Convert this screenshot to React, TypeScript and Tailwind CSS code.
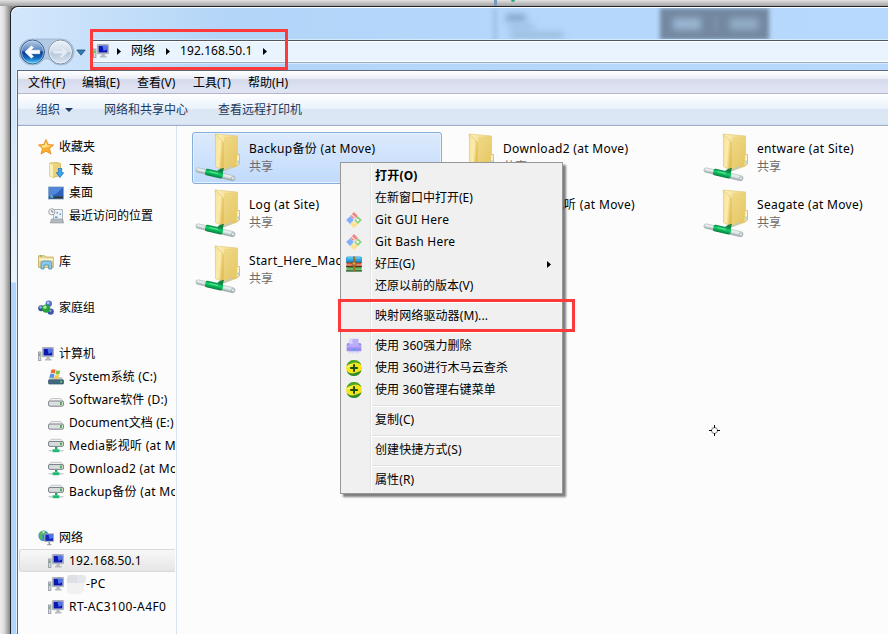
import type { ReactNode } from "react";

type IconProps = { className?: string };

function MonitorIcon({ className = "" }: IconProps) {
  return (
    <svg className={`size-4 shrink-0 ${className}`} viewBox="0 0 16 16">
      <rect x="0.5" y="6" width="2.4" height="8.5" fill="#d5d9de" stroke="#8f969e" strokeWidth="0.8" />
      <path d="M1.1 7.500h1.200v2.500H1.100z" fill="#39c23f" />
      <rect x="4.400" y="1.500" width="11.200" height="9.200" rx="0.6" fill="#c9cdd4" stroke="#9a9fa8" strokeWidth="0.8" />
      <rect x="5.600" y="2.700" width="8.800" height="6.800" fill="#0b17b0" />
      <path d="M9.500 2.700h4.900v3.600L10.600 8z" fill="#4f74ec" />
      <path d="M8.700 11h2.800l.5 2h1.500v1.400H7V13h1.200z" fill="#b4b9c0" />
    </svg>
  );
}

function StarIcon() {
  return (
    <svg className="size-4 shrink-0" viewBox="0 0 16 16">
      <path
        d="M8 .5l2.200 4.900 5.400.6-4.100 3.500 1.500 5.600L8 12.200l-5 2.900 1.500-5.600L.4 6l5.400-.6z"
        fill="#fdae2c"
        stroke="#e08a1c"
        strokeWidth="0.8"
      />
      <path d="M8 2.500l1.300 3.700 4 .5-5 1.500L5 9 2.800 6.800l3.900-.5z" fill="#ffe38f" />
    </svg>
  );
}

function DownloadsIcon() {
  return (
    <svg className="size-4 shrink-0" viewBox="0 0 16 16">
      <path d="M1.500 1L9 .5 12.500 1.500v12L5 15.500 1.500 14z" fill="#ecd27c" stroke="#c9aa4c" strokeWidth="0.7" />
      <path d="M1.500 1l3.500 2v12.500L1.500 14z" fill="#fbeeb4" />
      <path d="M10.300 6.500h3.400v4.200h2L12 15.600l-3.700-4.900h2z" fill="#3aa7ec" stroke="#1668b4" strokeWidth="0.7" />
    </svg>
  );
}

function DesktopIcon() {
  return (
    <svg className="size-4 shrink-0" viewBox="0 0 16 16">
      <rect x="0.5" y="2" width="15" height="12" fill="#2d62b8" stroke="#8ba6c9" strokeWidth="0.9" />
      <path d="M1 2.500h14L8 9 1 11z" fill="#5087d8" />
      <path d="M1 11.600h14v2H1z" fill="#32383f" />
      <circle cx="3.600" cy="11.600" r="2" fill="#3a8ade" />
      <path d="M2.600 10.600h1v1h-1z" fill="#f4d35a" />
      <path d="M3.800 11.800h1v1h-1z" fill="#80d56b" />
    </svg>
  );
}

function RecentIcon() {
  return (
    <svg className="size-4 shrink-0" viewBox="0 0 16 16">
      <path d="M5.500 1.500h9v10h-9z" fill="#eef2f5" stroke="#9ba3aa" strokeWidth="0.8" />
      <path d="M8.500 4h1.500v1.500H8.500zM11.500 5.500H13V7h-1.500zM7 8.500h2.500V10H7z" fill="#4b9ae0" />
      <path d="M3.500 11h11l1.200 4H2.200z" fill="#b4b9bd" stroke="#8e9498" strokeWidth="0.6" />
      <circle cx="3.800" cy="3.800" r="3.100" fill="#f3f5f6" stroke="#9299a0" strokeWidth="0.9" />
      <path d="M3.800 2v2h1.600" fill="none" stroke="#596067" strokeWidth="0.8" />
    </svg>
  );
}

function LibraryIcon() {
  return (
    <svg className="size-4 shrink-0" viewBox="0 0 16 16">
      <path d="M.5 3V1.700h6L8 3h7.300v10.500H.5z" fill="#ead795" stroke="#c5a855" strokeWidth="0.8" />
      <path d="M1 4.500h14v2H1z" fill="#fdf5cf" />
      <path d="M2 1.500h2v1H2z" fill="#45b649" />
      <path d="M3 15V9.500Q3 7 5.500 7h5.800q2.400 0 2.400 2.500V15h-3v-4H6v4z" fill="#8cc9ea" stroke="#438db8" strokeWidth="0.8" />
    </svg>
  );
}

function HomegroupIcon() {
  return (
    <svg className="size-4 shrink-0" viewBox="0 0 16 16">
      <circle cx="10.800" cy="3.800" r="3.200" fill="#5274c8" />
      <circle cx="3.200" cy="8.300" r="3" fill="#35509e" />
      <circle cx="12.600" cy="11.600" r="3.200" fill="#3b57ad" />
      <circle cx="8" cy="8.600" r="4.200" fill="#29a23a" />
      <circle cx="10.200" cy="2.800" r="1.400" fill="#b4c8f2" />
      <circle cx="2.600" cy="7.300" r="1.200" fill="#9fb3e6" />
      <circle cx="7" cy="7.200" r="1.700" fill="#a7e4a2" />
      <circle cx="12.400" cy="10.800" r="1.100" fill="#93a9e2" />
    </svg>
  );
}

function SystemDriveIcon() {
  return (
    <svg className="size-4 shrink-0" viewBox="0 0 16 16">
      <path d="M2.300 8h11.400l1.800 3v3.600H.5V11z" fill="#c3c9cf" />
      <rect x="0.5" y="10.800" width="15" height="4.300" rx="0.8" fill="#41697f" stroke="#31505f" strokeWidth="0.6" />
      <path d="M12.300 11.800h1.600v2h-1.600z" fill="#5ee04c" />
      <path d="M3.400.8q2.200-1.200 4.300 0l-1 3.800q-2-1.100-4.300 0z" fill="#ee6a33" />
      <path d="M8.400 1.200q1.900 1 4 0l-1 3.900q-2 1-4 0z" fill="#7fc247" />
      <path d="M2.200 5.300q2.200-1 4.300 0l-1 3.800q-2-1.100-4.300 0z" fill="#4c92de" />
      <path d="M7.200 5.700q1.900 1 4 0l-1 3.900q-2 1-4 0z" fill="#fbc73a" />
    </svg>
  );
}

function DriveIcon() {
  return (
    <svg className="size-4 shrink-0" viewBox="0 0 16 16">
      <path d="M3 6.500h10l2.300 3v4H.7v-4z" fill="#eff0f2" stroke="#b0b4b8" strokeWidth="0.7" />
      <rect x="0.500" y="9" width="15" height="5.200" rx="1.600" fill="#dcdfe2" stroke="#74787e" strokeWidth="0.9" />
      <path d="M12 10h1.800v3H12z" fill="#42b23d" />
    </svg>
  );
}

function NetDriveIcon() {
  return (
    <svg className="size-4 shrink-0" viewBox="0 0 16 16">
      <path d="M3 1.300h10l2.300 2.500v3.400H.7V3.800z" fill="#eff0f2" stroke="#b0b4b8" strokeWidth="0.7" />
      <rect x="0.500" y="3.500" width="15" height="4.900" rx="1.500" fill="#d8dbde" stroke="#74787e" strokeWidth="0.9" />
      <path d="M12 4.400h1.800v2.800H12z" fill="#42b23d" />
      <path d="M7 9h2.400v2.500H7z" fill="#2aa36b" />
      <path d="M.6 12h4v1.600h-4zM11.400 12h4v1.600h-4z" fill="#c9cdd0" />
      <path d="M4.600 11.300h6.800v2.900H4.600z" fill="#1dbb71" />
    </svg>
  );
}

function NetworkIcon() {
  return (
    <svg className="size-4 shrink-0" viewBox="0 0 16 16">
      <circle cx="5.600" cy="5.800" r="5.200" fill="#3189cd" />
      <path d="M2 2.500Q5-.4 8 1.500 6.500 5 3.500 5.500L5 8.500 3.500 10Q-.5 7 2 2.500z" fill="#52b956" />
      <path d="M4 1.600q2-.8 3 .2L5 3.600z" fill="#d9f4dc" />
      <rect x="6.600" y="3.800" width="9.200" height="7.800" fill="#c9cdd4" stroke="#979ca6" strokeWidth="0.6" />
      <rect x="7.300" y="4.500" width="7.800" height="6.400" fill="#1226bb" />
      <path d="M10.500 4.500h4.600v3.500L11.500 9z" fill="#4e75ec" />
      <path d="M10.400 12h1.800v2h1.200v1.200H9.200V14h1.200z" fill="#9da3ad" />
    </svg>
  );
}

function GitIcon() {
  return (
    <svg className="size-4 shrink-0" viewBox="0 0 16 16">
      <path d="M8 0l3.900 3.900L8 7.800 4.100 3.900z" fill="#f28585" />
      <path d="M4.100 4.200L8 8.100 4.100 12 .2 8.100z" fill="#80aefc" />
      <path d="M11.900 4.200l3.900 3.900-3.900 3.900L8 8.100z" fill="#82d472" />
      <path d="M8 8.300l3.900 3.900L8 16l-3.900-3.800z" fill="#fde18a" />
      <path d="M4.600 1.800l6.800 6M8 6v6" stroke="#f1f1f1" strokeWidth="1.100" />
      <circle cx="11.800" cy="8.100" r="1.400" fill="#f1f1f1" />
    </svg>
  );
}

function HaozipIcon() {
  return (
    <svg className="size-4 shrink-0" viewBox="0 0 16 16">
      <rect x="0" y="0.500" width="16" height="6" rx="1.800" fill="#2fa3dc" />
      <path d="M1.300 1.200h13.400v1.500H1.300z" fill="#6cc8f0" />
      <path d="M0 5.600h16v1.200H0z" fill="#155a80" />
      <path d="M.5 6.800h15v3H.5z" fill="#d1512c" />
      <path d="M.5 8.600h15v.7H.5z" fill="#f5d6bb" />
      <path d="M0 9.800h16V11H0z" fill="#70251a" />
      <path d="M.5 11h15v3.700H.5z" fill="#3a963c" />
      <path d="M.5 12.600h15v.8H.5z" fill="#cbe9b0" />
      <path d="M0 14.400h16v1.200H0z" fill="#1f5425" />
      <path d="M7 .5h2.200v15H7z" fill="#a5702e" />
      <path d="M6.200 6h3.700v3H6.200z" fill="#dfa84a" stroke="#6a441c" strokeWidth="0.6" />
    </svg>
  );
}

function ShredIcon() {
  return (
    <svg className="size-4 shrink-0" viewBox="0 0 16 16">
      <path d="M3.500.8h9V9h-9z" fill="#bcaff8" />
      <path d="M3.500.8h3v5h-3z" fill="#d8d0fd" />
      <path d="M1.600 5h1.900v4h9V5h1.900l.9 1.200v7H.7v-7z" fill="#9b8cf0" />
      <path d="M1 7.600h14v1.800H1z" fill="#b6a9fa" />
      <path d="M6.600 11h2.800v1.500H6.600z" fill="#46a9ee" />
      <path d="M3 13.200h10v1.300H3z" fill="#cfc7fa" />
      <path d="M3 14.500h1.200V16H3zM6 14.500h1.200v1H6zM9 14.500h1.200v1H9zM11.800 14.500H13V16h-1.200z" fill="#ded9fa" />
    </svg>
  );
}

function Shield360Icon() {
  return (
    <svg className="size-4 shrink-0" viewBox="0 0 16 16">
      <circle cx="8" cy="8" r="7.900" fill="#f6e51a" />
      <path d="M.4 5.800Q2.500-.4 9 .1q4.600.6 6.400 5Q11.500 1.600 7 3 3 4.200.4 5.800z" fill="#4aa52c" />
      <path d="M15.600 10.200Q13.500 16.400 7 15.900q-4.600-.6-6.400-5Q4.500 14.400 9 13q4-1.200 6.600-2.800z" fill="#2e8b2e" />
      <path d="M1.600 6.500Q4.500 3.600 8.500 3.400 4.500 4.700 1.700 8z" fill="#fdf9a8" />
      <path d="M7 4.200h2v2.800h2.800v2H9v2.800H7V9H4.200V7H7z" fill="#1c4f12" />
    </svg>
  );
}

function SharedFolderIcon() {
  return (
    <svg className="-ml-0.5 h-[52px] w-[54px] shrink-0" viewBox="0 0 54 52">
      <defs>
        <linearGradient id="folderBack" x1="0" x2="1" y1="0" y2="1">
          <stop offset="0" stopColor="#fdf2bd" />
          <stop offset="1" stopColor="#dfbd58" />
        </linearGradient>
        <linearGradient id="folderFlap" x1="0" x2="1" y1="0" y2="0.4">
          <stop offset="0" stopColor="#f7e396" />
          <stop offset="0.6" stopColor="#fbecae" />
          <stop offset="1" stopColor="#e3bd55" />
        </linearGradient>
        <linearGradient id="pipe" x1="0" x2="0" y1="0" y2="1">
          <stop offset="0" stopColor="#f4f8f8" />
          <stop offset="0.5" stopColor="#dbe4e5" />
          <stop offset="1" stopColor="#93a2a4" />
        </linearGradient>
        <linearGradient id="joint" x1="0" x2="0" y1="0" y2="1">
          <stop offset="0" stopColor="#0b8a46" />
          <stop offset="0.4" stopColor="#12d06a" />
          <stop offset="1" stopColor="#067a39" />
        </linearGradient>
      </defs>
      <path d="M24 2l22.500 2v30l-14 5z" fill="url(#folderBack)" stroke="#e3cb7c" strokeWidth="0.7" />
      <path d="M33 5l13.500-1v28L33 38z" fill="#e9cb68" opacity="0.5" />
      <path d="M46.500 22.500h2v9.500l-3 1.500" fill="#fbf3d3" stroke="#d7ba62" strokeWidth="0.9" />
      <path d="M47 28.500v3" stroke="#74b8e8" strokeWidth="1" />
      <path d="M24.400 2l8.100 8.500v28L24.500 34.500z" fill="url(#folderFlap)" stroke="#dfc169" strokeWidth="0.6" />
      <path d="M30 40l10-5" stroke="#bccacb" strokeWidth="1.800" />
      <path d="M26 39q4-3.500 7-3l-1.500 5z" fill="#10843e" />
      <g transform="rotate(13 24 42)">
        <rect x="4.500" y="39.800" width="12" height="4.400" rx="2" fill="url(#pipe)" stroke="#a3b1b1" strokeWidth="0.600" />
        <rect x="30" y="39.600" width="14.500" height="5" rx="2.200" fill="url(#pipe)" stroke="#a3b1b1" strokeWidth="0.600" />
        <rect x="14" y="38.600" width="18" height="6.600" rx="1.800" fill="url(#joint)" />
        <path d="M18 40.800h9" stroke="#5fe898" strokeWidth="1.200" />
        <circle cx="42.300" cy="42.200" r="1.700" fill="#dfe7e8" stroke="#8e9c9e" strokeWidth="0.600" />
      </g>
    </svg>
  );
}

function NavButtons() {
  return (
    <svg className="-mt-[3px] h-[30px] w-[71px] shrink-0" viewBox="0 0 71 30">
      <defs>
        <linearGradient id="back" x1="0" x2="0" y1="0" y2="1">
          <stop offset="0" stopColor="#b9cde8" />
          <stop offset="0.44" stopColor="#5a84c0" />
          <stop offset="0.5" stopColor="#0c3c8b" />
          <stop offset="0.75" stopColor="#1468bd" />
          <stop offset="1" stopColor="#4fdcff" />
        </linearGradient>
        <linearGradient id="forward" x1="0" x2="0" y1="0" y2="1">
          <stop offset="0" stopColor="#eaf0f7" />
          <stop offset="0.48" stopColor="#d3deea" />
          <stop offset="0.52" stopColor="#b6c6d9" />
          <stop offset="1" stopColor="#d9e5f3" />
        </linearGradient>
      </defs>
      <path
        d="M13 2h29a12.800 12.800 0 0 1 0 26q-7 0-10-5-4-3-8 0-3 5-11 5a12.800 12.800 0 0 1 0-26z"
        fill="#b3cae3"
        stroke="#9bb4cf"
        strokeWidth="0.8"
      />
      <circle cx="13.500" cy="15" r="11.900" fill="url(#back)" stroke="#34527f" strokeWidth="0.9" />
      <circle cx="13.500" cy="15" r="11" fill="none" stroke="#b4d8f1" strokeWidth="0.700" />
      <path
        d="M6 15l6.500-6.200 1.900 1.900-2.700 2.600h9v3.400h-9l2.700 2.600-1.900 1.900z"
        fill="#fff"
        stroke="#fff"
        strokeWidth="0.600"
        strokeLinejoin="round"
      />
      <circle cx="41.500" cy="15" r="11.900" fill="url(#forward)" stroke="#7a8a9e" strokeWidth="0.9" />
      <circle cx="41.500" cy="15" r="10.900" fill="none" stroke="#f2f6fb" strokeWidth="0.800" />
      <path
        d="M49 15l-6.500-6.200-1.900 1.900 2.700 2.600h-9v3.400h9l-2.700 2.600 1.900 1.900z"
        fill="#e3ebf4"
        stroke="#c3d0de"
        strokeWidth="0.500"
        strokeLinejoin="round"
      />
      <path d="M57.800 13h8.400L62 18.200z" fill="#2f7db4" stroke="#1f5079" strokeWidth="0.800" />
    </svg>
  );
}

function Arrow({ className = "" }: IconProps) {
  return (
    <svg className={`h-[7px] w-1 shrink-0 ${className}`} viewBox="0 0 4 7">
      <path d="M0 0l4 3.500-4 3.500z" fill="#000" />
    </svg>
  );
}

type TreeRow = {
  label: ReactNode;
  icon: ReactNode;
  root?: boolean;
  selected?: boolean;
  tracking?: string;
} | null;

const tree: TreeRow[] = [
  { label: "收藏夹", icon: <StarIcon />, root: true },
  { label: "下载", icon: <DownloadsIcon /> },
  { label: "桌面", icon: <DesktopIcon /> },
  { label: "最近访问的位置", icon: <RecentIcon /> },
  null,
  { label: "库", icon: <LibraryIcon />, root: true },
  null,
  { label: "家庭组", icon: <HomegroupIcon />, root: true },
  null,
  { label: "计算机", icon: <MonitorIcon />, root: true },
  { label: "System系统 (C:)", icon: <SystemDriveIcon />, tracking: "tracking-[0.15px]" },
  { label: "Software软件 (D:)", icon: <DriveIcon />, tracking: "tracking-[0.15px]" },
  { label: "Document文档 (E:)", icon: <DriveIcon />, tracking: "tracking-[0.1px]" },
  { label: "Media影视听 (at Move)", icon: <NetDriveIcon />, tracking: "tracking-[0.3px]" },
  { label: "Download2 (at Move)", icon: <NetDriveIcon />, tracking: "tracking-[0.35px]" },
  { label: "Backup备份 (at Move)", icon: <NetDriveIcon />, tracking: "tracking-[0.3px]" },
  null,
  { label: "网络", icon: <NetworkIcon />, root: true },
  { label: "192.168.50.1", icon: <MonitorIcon />, selected: true, tracking: "tracking-[0.1px]" },
  {
    label: (
      <span className="flex items-center">
        <svg className="-ml-0.5 h-5 w-[19px]" viewBox="0 0 19 20">
          <path d="M2 1h15q2 1 2 4v3l-2 2v6q-2 4-7 4H2q-3-2-2-6V4z" fill="#f1f1f2" />
          <path d="M2 1h8v8H0V4z" fill="#dfe0e6" />
          <path d="M10 1h7q2 1 2 4l-2 4h-7z" fill="#e6e7ea" />
        </svg>
        -PC
      </span>
    ),
    icon: <MonitorIcon />,
    tracking: "tracking-[0.3px]",
  },
  { label: "RT-AC3100-A4F0", icon: <MonitorIcon />, tracking: "tracking-[0.42px]" },
];

const folders = [
  { name: "Backup备份 (at Move)", selected: true },
  { name: "Download2 (at Move)" },
  { name: "entware (at Site)" },
  { name: "Log (at Site)" },
  { name: "Media影视听 (at Move)" },
  { name: "Seagate (at Move)" },
  { name: "Start_Here_Mac.app" },
];

type MenuRow = { label: string; icon?: ReactNode; className?: string; submenu?: boolean } | null;

const contextMenu: MenuRow[] = [
  { label: "打开(O)", className: "font-bold tracking-[0.2px]" },
  { label: "在新窗口中打开(E)" },
  { label: "Git GUI Here", icon: <GitIcon />, className: "tracking-[0.26px]" },
  { label: "Git Bash Here", icon: <GitIcon />, className: "tracking-[0.24px]" },
  { label: "好压(G)", icon: <HaozipIcon />, submenu: true },
  { label: "还原以前的版本(V)" },
  null,
  { label: "映射网络驱动器(M)...", className: "tracking-[0.1px]" },
  null,
  { label: "使用 360强力删除", icon: <ShredIcon />, className: "tracking-[0.1px]" },
  { label: "使用 360进行木马云查杀", icon: <Shield360Icon />, className: "tracking-[0.1px]" },
  { label: "使用 360管理右键菜单", icon: <Shield360Icon />, className: "tracking-[0.1px]" },
  null,
  { label: "复制(C)", className: "tracking-[0.1px]" },
  null,
  { label: "创建快捷方式(S)", className: "tracking-[0.1px]" },
  null,
  { label: "属性(R)", className: "tracking-[0.1px]" },
];

function TitleBar() {
  return (
    <div className="relative flex h-[63px] shrink-0 items-start overflow-hidden rounded-tl-lg border-t border-white bg-linear-to-r from-[#d3e7fb] via-[#b3d5f8] via-25% to-[#b6d9fd] pt-[32px] pl-2">
      {/* windows behind the glass */}
      <div className="absolute top-0 left-[482px] h-10 w-1 bg-[#9dc1e6] blur-[2px]" />
      <div className="absolute top-1.5 left-[495px] h-2 w-5 bg-[#84a9cd] blur-[3px]" />
      <div className="absolute top-4 left-[499px] h-1.5 w-6 bg-[#9dbfe2] blur-[3px]" />
      <div className="absolute top-6 left-[500px] h-1.5 w-13 bg-[#98bada] blur-[3px]" />
      <div className="absolute top-0 left-[649px] h-8 w-[109px] bg-[#7489a1] blur-[2px]" />
      <div className="absolute top-2 left-[662px] flex h-4 w-[85px] items-center justify-between">
        <div className="h-3 w-7 bg-[#98b4d0] blur-[3px]" />
        <div className="h-3 w-0.5 bg-[#8399b1] blur-[2px]" />
        <div className="h-3 w-7 bg-[#91abc6] blur-[3px]" />
      </div>

      <NavButtons />
      <div className="relative flex h-[23px] flex-1 items-center border-t border-b border-t-[#4f5966] border-b-[#96abc4] bg-[#eaf4fe] pb-px pl-[3px] text-black shadow-[inset_0_1px_0_#fff,inset_0_-1px_0_#fff,0_-1px_0_#d5e9fc,0_1px_0_#d8eafc]">
        <MonitorIcon />
        <Arrow className="ml-2" />
        <span className="ml-2.5 w-[35px]">网络</span>
        <Arrow />
        <span className="ml-2.5 w-[83px] tracking-[0.08px]">192.168.50.1</span>
        <Arrow />
      </div>
    </div>
  );
}

function MenuBar() {
  return (
    <div className="flex h-[23px] shrink-0 items-center border-b border-[#b2b7cd] bg-[linear-gradient(#fff_0,#eaedf6_8px,#d5daec_8px,#e2e6f4_22px)] pt-0.5 pl-2.5 text-black">
      <span className="w-[54px]">文件(F)</span>
      <span className="w-[55px]">编辑(E)</span>
      <span className="w-14">查看(V)</span>
      <span className="w-[55px]">工具(T)</span>
      <span>帮助(H)</span>
    </div>
  );
}

function Toolbar() {
  return (
    <div className="flex h-8 shrink-0 items-center border-b border-[#9eaec9] bg-[linear-gradient(#fff_0,#e9f2fc_15px,#dbe6f4_15px,#dde8f5_30px,#c6d5e8_31px)] pl-[18px] text-[#1e395b]">
      <span>组织</span>
      <svg className="ml-[5px] h-1 w-2" viewBox="0 0 8 4">
        <path d="M0 0h8L4 4z" fill="#1e395b" />
      </svg>
      <span className="ml-[31px]">网络和共享中心</span>
      <span className="ml-[30px]">查看远程打印机</span>
    </div>
  );
}

function Sidebar() {
  return (
    <div className="w-[159px] shrink-0 overflow-hidden border-r border-[#d5e3f2] pt-[9px] pr-px">
      {tree.map((row, i) =>
        row ? (
          <div
            key={i}
            className={`flex h-[23px] items-center gap-[5px] overflow-hidden whitespace-nowrap ${
              row.root ? "pl-5" : "pl-[30px]"
            } ${
              row.selected
                ? "ml-px rounded-l-[3px] border border-r-0 border-[#d9d9d9] bg-linear-to-b from-[#f8f8f8] to-[#e6e6e6] pl-[28px]!"
                : ""
            }`}
          >
            {row.icon}
            <span className={row.tracking}>{row.label}</span>
          </div>
        ) : (
          <div key={i} className="h-[23px]" />
        )
      )}
    </div>
  );
}

function FolderGrid() {
  return (
    <div className="grid flex-1 grid-cols-[250px_250px_250px] content-start gap-1 overflow-hidden pt-1.5 pl-[15px]">
      {folders.map((folder) => (
        <div
          key={folder.name}
          className={`flex h-[52px] items-center gap-1 rounded-[3px] border ${
            folder.selected
              ? "border-[#84acdd] bg-linear-to-b from-[#dceafc] to-[#c1dbfc] shadow-[inset_0_0_0_1px_#e8f2fd]"
              : "border-transparent"
          }`}
        >
          <SharedFolderIcon />
          <div className="leading-[18px] whitespace-nowrap">
            <div className="tracking-[0.32px]">{folder.name}</div>
            <div className="text-[#6d6d6d]">共享</div>
          </div>
        </div>
      ))}
    </div>
  );
}

function ContextMenu() {
  return (
    <div className="absolute top-[162px] left-[340px] w-[223px] border border-[#979797] bg-[#f0f0f0] p-0.5 shadow-[3px_3px_2px_rgba(0,0,0,0.5)]">
      <div className="bg-[linear-gradient(90deg,transparent_27px,#e2e3e3_27px,#e2e3e3_28px,#fff_28px,#fff_29px,transparent_29px)]">
        {contextMenu.map((row, i) =>
          row ? (
            <div key={i} className="flex h-[22px] items-center pl-[3px] text-black">
              <div className="w-[29px]">{row.icon}</div>
              <span className={`flex-1 whitespace-nowrap ${row.className ?? ""}`}>{row.label}</span>
              {row.submenu && <Arrow className="mr-[9px]" />}
            </div>
          ) : (
            <div key={i} className="flex h-2 items-center pt-px">
              <div className="ml-[29px] h-0.5 flex-1 border-t border-b border-t-[#dedfdf] border-b-white" />
            </div>
          )
        )}
      </div>
    </div>
  );
}

export default function App() {
  return (
    <div className="relative flex h-[634px] w-[888px] overflow-hidden bg-[linear-gradient(90deg,#eee_0,#ddd_4px,#888_10px)] font-['Noto_Sans','Noto_Sans_CJK_SC',sans-serif] text-xs leading-4 text-black">
      <div className="absolute inset-x-0 top-0 h-1.5 bg-linear-to-b from-[#e2e2e2] to-[#a3a3a3]" />
      <div className="absolute top-0 left-[494px] h-1.5 w-[3px] bg-[#7899bb]" />
      <div className="absolute top-0 left-[511px] h-0.5 w-1 rounded-b bg-[#2eaa80]" />

      <div className="relative mt-1.5 ml-2.5 flex flex-1 flex-col overflow-hidden rounded-tl-lg border-t border-l border-[#1c232b] bg-[linear-gradient(#d5e8fb_0,#d0e5fb_100px,#e9f2fb_275px,#afd4fa_276px)]">
        <TitleBar />
        <div className="ml-1.5 flex min-h-0 flex-1 flex-col border-t border-l border-[#5c697c] bg-[#fcfcfc] shadow-[-1px_-1px_0_#e4f1fd]">
          <MenuBar />
          <Toolbar />
          <div className="flex min-h-0 flex-1">
            <Sidebar />
            <FolderGrid />
          </div>
        </div>
      </div>

      <ContextMenu />

      {/* highlighted areas */}
      <div className="absolute top-[29px] left-[90px] h-[41px] w-[198px] border-3 border-[#fc3a3a]" />
      <div className="absolute top-[299px] left-[338px] h-[33px] w-[237px] border-3 border-[#fc3a3a]" />

      <svg className="absolute top-[425px] left-[709px] size-[11px]" viewBox="0 0 11 11" fill="none">
        <circle cx="5.500" cy="5.500" r="3" stroke="#777" />
        <path d="M5.500 0v3M5.500 8v3M0 5.500h3M8 5.500h3" stroke="#000" />
      </svg>
    </div>
  );
}
